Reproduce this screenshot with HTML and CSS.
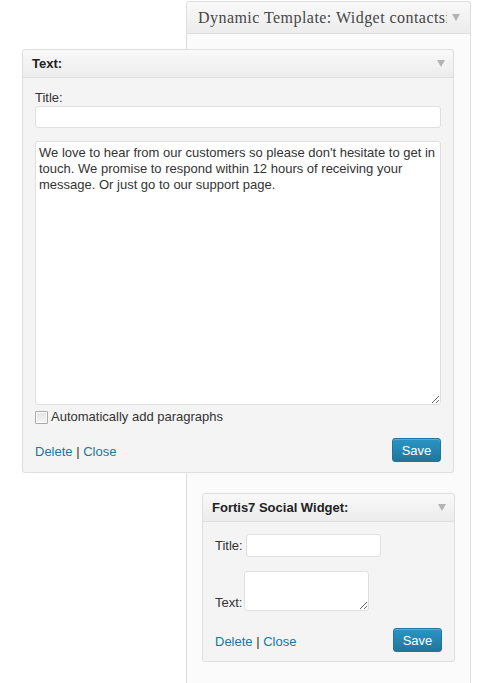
FILE: index.html
```html
<!DOCTYPE html>
<html>
<head>
<meta charset="utf-8">
<link rel="stylesheet" href="styles.css">
</head>
<body>
<div class="sidebar">
  <div class="sidebar-head">
    <span class="sidebar-title">Dynamic Template: Widget contactsidebar</span>
    <span class="arrow"></span>
  </div>
  <div class="sidebar-body">
    <div class="placeholder"></div>
    <div class="widget social">
      <div class="widget-head">
        <span class="widget-title">Fortis7 Social Widget:</span>
        <span class="arrow"></span>
      </div>
      <div class="widget-body">
        <div class="field-row">
          <label class="inline-label">Title:</label>
          <input class="input small-input" type="text">
        </div>
        <div class="field-row bottom">
          <label class="inline-label">Text:</label>
          <textarea class="textarea small-textarea"></textarea>
        </div>
        <div class="actions">
          <div class="links"><a href="#">Delete</a> | <a href="#">Close</a></div>
          <button class="save">Save</button>
        </div>
      </div>
    </div>
  </div>
</div>

<div class="widget text-widget">
  <div class="widget-head">
    <span class="widget-title">Text:</span>
    <span class="arrow"></span>
  </div>
  <div class="widget-body">
    <label class="block-label">Title:</label>
    <input class="input wide-input" type="text">
    <textarea class="textarea big-textarea">We love to hear from our customers so please don't hesitate to get in touch. We promise to respond within 12 hours of receiving your message. Or just go to our support page.</textarea>
    <label class="check-row"><input class="checkbox" type="checkbox"><span>Automatically add paragraphs</span></label>
    <div class="actions">
      <div class="links"><a href="#">Delete</a> | <a href="#">Close</a></div>
      <button class="save">Save</button>
    </div>
  </div>
</div>
</body>
</html>
```
FILE: styles.css
```css
* { box-sizing: border-box; }
html, body { margin: 0; padding: 0; background: #fff; }
body {
  font-family: "Liberation Sans", Arial, sans-serif;
  font-size: 13px;
  color: #333;
  position: relative;
  width: 478px;
  height: 683px;
  overflow: hidden;
}

.sidebar {
  margin: 1px 0 0 186px;
  width: 285px;
  height: 682px;
  border: 1px solid #dfdfdf;
  border-bottom: none;
  border-radius: 3px 3px 0 0;
  background: #fbfbfb;
}
.sidebar-head {
  height: 32px;
  display: flex;
  align-items: center;
  justify-content: space-between;
  padding: 0 10px 0 11px;
  background: linear-gradient(#f9f9f9, #ececec);
  border-bottom: 1px solid #dfdfdf;
  border-radius: 3px 3px 0 0;
}
.sidebar-title {
  font-family: "Liberation Serif", Georgia, serif;
  font-size: 16px;
  letter-spacing: 0.45px;
  color: #464646;
  white-space: nowrap;
  overflow: hidden;
  width: 249px;
  padding-top: 1px;
}
.sidebar-body { padding: 0 15px; }
.placeholder { height: 459px; }

.arrow {
  width: 0;
  height: 0;
  border-left: 4px solid transparent;
  border-right: 4px solid transparent;
  border-top: 7px solid #b4b4b4;
  flex: none;
}

.widget {
  border: 1px solid #dfdfdf;
  border-radius: 3px;
  background: #f4f4f4;
}
.widget-head {
  height: 28px;
  display: flex;
  align-items: center;
  justify-content: space-between;
  padding: 0 8px 0 9px;
  background: linear-gradient(#f9f9f9, #ececec);
  border-bottom: 1px solid #dfdfdf;
  border-radius: 3px 3px 0 0;
}
.widget-title {
  font-weight: bold;
  color: #222;
  font-size: 13px;
}

.text-widget {
  position: absolute;
  left: 22px;
  top: 49px;
  width: 432px;
  height: 424px;
  box-shadow: 0 0 1px rgba(0,0,0,0.05);
}
.text-widget .widget-body { padding: 12px 12px 9px 12px; }
.block-label { display: block; line-height: 16px; }

.input {
  display: block;
  border: 1px solid #dfdfdf;
  border-radius: 3px;
  background: #fff;
  font: 13px "Liberation Sans", Arial, sans-serif;
  margin: 0;
  padding: 2px 4px;
}
.wide-input { width: 406px; height: 22px; }

.textarea {
  display: block;
  border: 1px solid #dfdfdf;
  border-radius: 3px;
  background: #fff;
  margin: 0;
  font: 13px/16px "Liberation Sans", Arial, sans-serif;
  color: #333;
  resize: both;
}
.big-textarea {
  width: 406px;
  height: 264px;
  margin-top: 13px;
  padding: 3px 3px;
}

.check-row {
  display: flex;
  align-items: center;
  height: 16px;
  margin-top: 4px;
  line-height: 16px;
}
.checkbox {
  appearance: none;
  -webkit-appearance: none;
  width: 13px;
  height: 13px;
  margin: 0 3px 0 0;
  border: 1px solid #a9a9a9;
  background: linear-gradient(#e4e4e4, #f4f4f4);
  box-shadow: inset 1px 1px 0 #fff, inset -1px -1px 0 #fff;
  border-radius: 1px;
}

.actions {
  display: flex;
  align-items: center;
  justify-content: space-between;
  margin-top: 13px;
}
.links { color: #333; line-height: 16px; padding-top: 3px; }
.links a { color: #21759b; text-decoration: none; }
.save {
  width: 49px;
  height: 24px;
  border: 1px solid #21759b;
  border-radius: 3px;
  background: linear-gradient(#2a95c5, #21759b);
  color: #fff;
  font: 13px "Liberation Sans", Arial, sans-serif;
  padding: 0;
  box-shadow: inset 0 1px 0 rgba(120,200,230,0.5);
}

.social .widget-body { padding: 12px 12px 9px 12px; }
.field-row { display: flex; align-items: center; }
.field-row.bottom { align-items: flex-end; margin-top: 14px; }
.inline-label { line-height: 16px; }
.small-input { width: 135px; height: 23px; margin-left: 3px; }
.small-textarea { width: 125px; height: 40px; margin-left: 2px; }
.social .actions { margin-top: 17px; }
```
